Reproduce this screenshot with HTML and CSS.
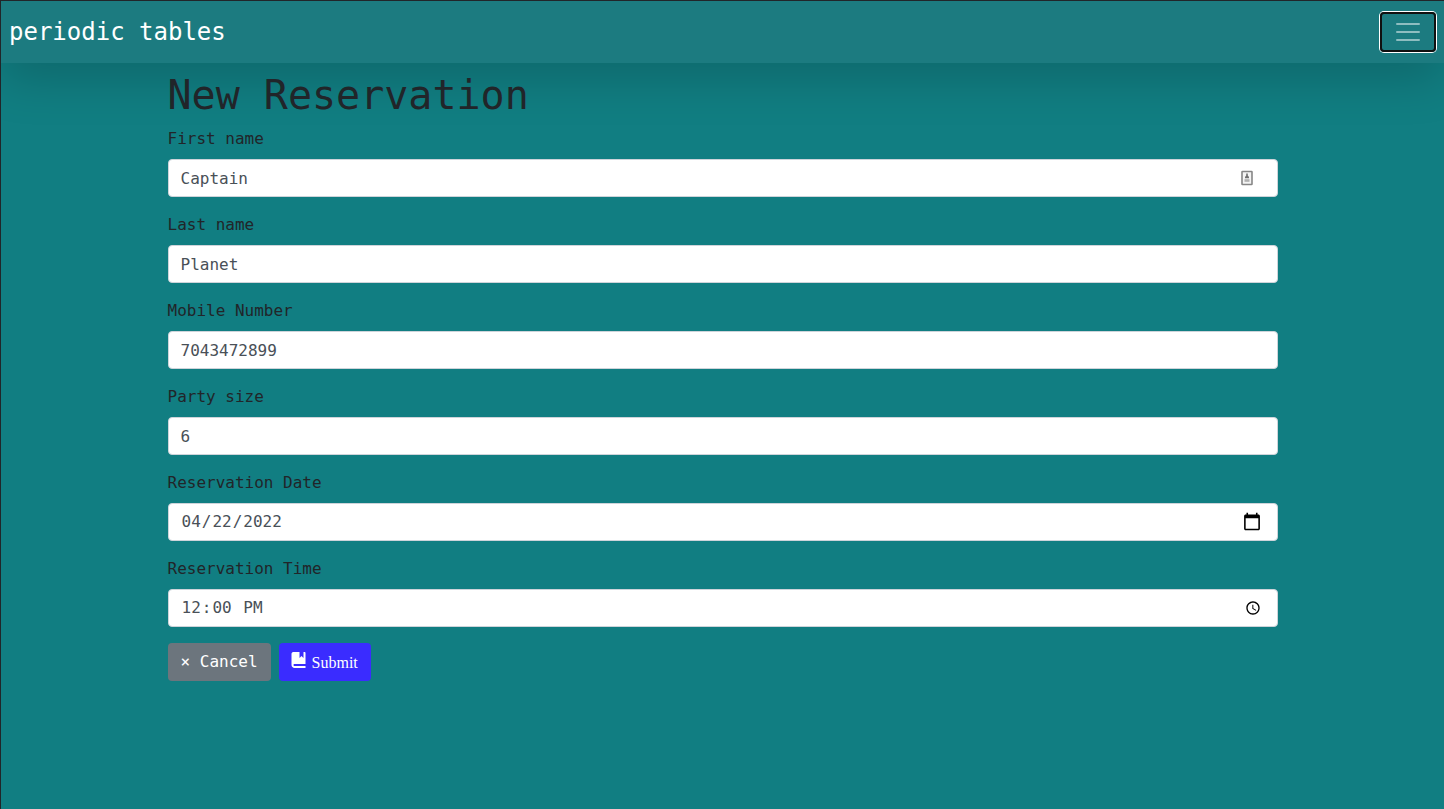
FILE: index.html
```html
<!DOCTYPE html>
<html lang="en">
<head>
<meta charset="utf-8">
<title>Periodic Tables</title>
<link rel="stylesheet" href="styles.css">
</head>
<body>
<nav class="navbar">
  <a class="brand">periodic tables</a>
  <button class="toggler" type="button" aria-label="Toggle navigation">
    <svg width="30" height="30" viewBox="0 0 30 30"><path d="M4 7h22M4 15h22M4 23h22" stroke="rgba(255,255,255,.5)" stroke-width="2" stroke-linecap="round" stroke-miterlimit="10"/></svg>
  </button>
</nav>
<main class="container">
  <h1 class="title">New Reservation</h1>
  <form>
    <div class="group">
      <label class="label" for="first">First name</label>
      <div class="field">
        <input class="control" id="first" type="text" value="Captain">
        <svg class="autofill" width="12" height="16" viewBox="0 0 12 16"><rect x="1" y="1.5" width="10" height="13" rx=".5" fill="#f4f4f4" stroke="#868686" stroke-width="1.6"/><path d="M5.2 3.6h1.6v2L8 7v1.2H4V7l1.2-1.4z" fill="#707070"/><path d="M3.5 9.2h5v2.6h-5z" fill="#b0b0b0"/></svg>
      </div>
    </div>
    <div class="group">
      <label class="label" for="last">Last name</label>
      <input class="control" id="last" type="text" value="Planet">
    </div>
    <div class="group">
      <label class="label" for="mobile">Mobile Number</label>
      <input class="control" id="mobile" type="text" value="7043472899">
    </div>
    <div class="group">
      <label class="label" for="party">Party size</label>
      <input class="control" id="party" type="text" value="6">
    </div>
    <div class="group">
      <label class="label" for="date">Reservation Date</label>
      <input class="control" id="date" type="date" value="2022-04-22">
    </div>
    <div class="group">
      <label class="label" for="time">Reservation Time</label>
      <input class="control" id="time" type="time" value="12:00">
    </div>
    <div class="actions">
      <button class="btn cancel" type="button">× Cancel</button>
      <button class="btn submit" type="submit"><svg class="book" width="16" height="16" viewBox="-.25 0 8 8"><path fill="#fff" d="M1 0c-.07 0-.13.01-.19.03-.39.08-.7.39-.78.78-.03.06-.03.12-.03.19v5.5c0 .83.67 1.5 1.5 1.5h5.5v-1h-5.5c-.28 0-.5-.22-.5-.5s.22-.5.5-.5h5.5v-5.5c0-.28-.22-.5-.5-.5h-.5v3l-1-1-1 1v-3h-3z"/></svg><span class="submit-text">Submit</span></button>
    </div>
  </form>
</main>
</body>
</html>
```
FILE: styles.css
```css
* { box-sizing: border-box; }
html { height: 100%; overflow: hidden; }
body {
  margin: 0;
  height: 100%;
  border-top: 1px solid #212529;
  border-left: 1px solid #212529;
  background: #117e82;
  color: #212529;
  font: 16px/1.5 "DejaVu Sans Mono", monospace;
  overflow: hidden;
}
.navbar {
  display: flex;
  align-items: center;
  justify-content: space-between;
  height: 62px;
  padding: 8px;
  margin-bottom: 8px;
  background: #1c7b80;
  box-shadow: 0 16px 48px rgba(0, 0, 0, .175);
}
.brand { font-size: 24px; color: #fff; }
.toggler {
  display: flex;
  align-items: center;
  justify-content: center;
  width: 56px;
  height: 40px;
  padding: 0;
  background: transparent;
  border: 2px solid #101010;
  border-radius: 4px;
  box-shadow: 0 0 0 1px #fff;
}
.container { width: 1140px; margin: 0 auto; padding: 0 15px; }
.title { margin: 0 0 8px; font-size: 40px; font-weight: 500; line-height: 48px; }
.group { margin-bottom: 16px; }
.label { display: block; margin-bottom: 8px; }
.field { position: relative; }
.control {
  display: block;
  width: 100%;
  height: 38px;
  padding: 6px 12px;
  font: inherit;
  color: #495057;
  background: #fff;
  border: 1px solid #ced4da;
  border-radius: 4px;
}
.control[type="date"]::-webkit-calendar-picker-indicator {
  width: 20px;
  height: 20px;
  padding: 0;
  margin-right: 3px;
  background-size: contain;
  background-repeat: no-repeat;
}
.autofill { position: absolute; right: 25px; top: 11px; }
.actions { display: flex; gap: 8px; }
.btn {
  height: 38px;
  padding: 6px 12px;
  border: 1px solid transparent;
  border-radius: 4px;
  color: #fff;
  font: inherit;
}
.cancel { background: #6c757d; }
.submit {
  display: flex;
  gap: 4px;
  background: #3a2cff;
  font-family: "Liberation Serif", serif;
}
.book { margin: 2px .5px 0 -.5px; }
.submit-text { padding-top: 1px; }
```
